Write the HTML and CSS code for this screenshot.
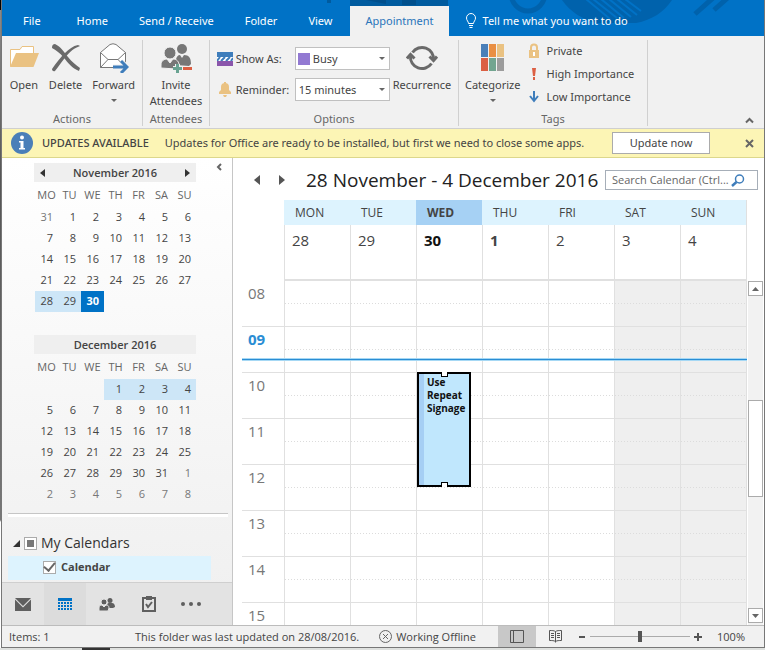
FILE: index.html
```html
<!DOCTYPE html>
<html lang="en">
<head>
  <meta charset="UTF-8">
  <meta name="viewport" content="width=device-width, initial-scale=1.0">
  <title>Calendar - Outlook</title>
  <link rel="stylesheet" href="styles.css">
</head>
<body>
  <div class="window">
    <header class="titlebar">
      <svg class="titlebar-art" width="440" height="36" viewBox="0 0 440 36" aria-hidden="true">
        <path d="M187 -7a17 18 0 0 0 34 0" fill="none" stroke="#0062ac" stroke-width="5"/>
        <path d="M238 0C246 12 260 20 272 23H312C328 20 340 12 348 0z" fill="#0062ac"/>
        <path d="M262 -1L286 19M269 -1L293 18M277 -1L300 18M285 -1L307 17M293 -1L313 15M301 -1L317 11" stroke="#0072c6" stroke-width="2"/>
        <path d="M371 14L389 -2M390 10L408 -6" fill="none" stroke="#0062ac" stroke-width="5"/>
        <path d="M3 0h4v3h-4zM26 0h98v6H26z" fill="#005b9f"/>
        <path d="M42 0h20v4zM78 0h14v5H78z" fill="#004f8c"/>
      </svg>
      <nav class="tabs">
        <button class="tab tab-file">File</button>
        <button class="tab">Home</button>
        <button class="tab">Send / Receive</button>
        <button class="tab">Folder</button>
        <button class="tab">View</button>
        <button class="tab tab-active">Appointment</button>
        <button class="tab tell-me">
          <svg width="12" height="16" viewBox="0 0 12 16" fill="none" stroke="#fff" aria-hidden="true">
            <path d="M3.5 10.5C3.5 8.500 1.500 7.500 1.500 5a4.500 4.500 0 0 1 9 0C10.500 7.500 8.500 8.500 8.500 10.500zM4 12.500h4M4.500 14.500h3"/>
          </svg>
          Tell me what you want to do
        </button>
      </nav>
    </header>

    <section class="ribbon">
      <div class="group group-actions">
        <div class="group-body">
          <button class="big-button">
            <svg width="30" height="30" viewBox="0 0 30 30" aria-hidden="true">
              <path d="M1.500 23.500V6.500H11l2-3h11.500V12" fill="#fff" stroke="#eac282"/>
              <path d="M7 10h23l-5.500 14H1z" fill="#eac282"/>
            </svg>
            <span>Open</span>
          </button>
          <button class="big-button">
            <svg width="30" height="30" viewBox="0 0 30 30" aria-hidden="true">
              <path d="M4 1c6 3 9 8 13 13s8 8 12 11l-1 3C21 25 17 20 13 15S5 7 1 5c0-3 1-4 3-4z" fill="#6a6a6a"/>
              <path d="M29 3c-8 3-12 8-16 13S7 24 4 28c-2 1-3-1-3-2C5 20 10 14 14 10S22 3 27 2z" fill="#6a6a6a"/>
            </svg>
            <span>Delete</span>
          </button>
          <button class="big-button">
            <svg width="30" height="30" viewBox="0 0 30 30" aria-hidden="true">
              <path d="M1.500 9.500L11 1.500q3-1.500 6 0l9.500 8V24.500h-25z" fill="#fff" stroke="#777"/>
              <path d="M1.500 9.500L9 16.500h10l7.500-7M1.500 24.500L9 16.500M26.500 24.500L19 16.500" fill="none" stroke="#777"/>
              <path d="M14 24h14M22 18l6 6-6 6" fill="none" stroke="#f1f1f1" stroke-width="5"/>
              <path d="M14 24h14M22 18l6 6-6 6" fill="none" stroke="#3e7dbb" stroke-width="3"/>
            </svg>
            <span>Forward</span>
            <i class="caret"></i>
          </button>
        </div>
        <div class="group-title">Actions</div>
      </div>

      <div class="group group-attendees">
        <div class="group-body">
          <button class="big-button">
            <svg width="32" height="30" viewBox="0 0 32 30" aria-hidden="true">
              <g fill="#777">
                <circle cx="22" cy="6" r="5"/>
                <path d="M16 22v-5c0-3 2-5 4-5l2 3 2-3c5 0 7 3 7 9l-2 2z"/>
                <circle cx="10" cy="10" r="6" stroke="#f1f1f1"/>
                <path d="M1 25v-3c0-4 3-6 6-6l3 4 3-4c4 0 6 3 6 6l-3 4z" stroke="#f1f1f1"/>
              </g>
              <path d="M13 25.500h9M17.500 21v9" stroke="#f1f1f1" stroke-width="5"/>
              <path d="M13 25.500h9M17.500 21v9" stroke="#69a392" stroke-width="3"/>
              <path d="M23 25.500h9" stroke="#dc5f43" stroke-width="3"/>
            </svg>
            <span>Invite<br>Attendees</span>
          </button>
        </div>
        <div class="group-title">Attendees</div>
      </div>

      <div class="group group-options">
        <div class="group-body">
          <div class="fields">
            <svg width="16" height="16" viewBox="0 0 16 16" aria-hidden="true">
              <path d="M0 1h16v5H0z" fill="#3e7dbb"/>
              <path d="M0 6h16v4H0z" fill="#fff"/>
              <path d="M0 10l3-4M4 10l4-4M9 10l4-4M14 10l2-3" stroke="#3e7dbb" stroke-width="2"/>
              <path d="M0 10h16v5H0z" fill="#8a56ab"/>
            </svg>
            <label for="show-as">Show As:</label>
            <div class="combo combo-swatch">
              <select id="show-as"><option>Busy</option><option>Free</option><option>Tentative</option></select>
              <i class="caret"></i>
            </div>
            <svg width="16" height="16" viewBox="0 0 16 16" aria-hidden="true">
              <path d="M2 12v-2l2-2V5a4 4 0 0 1 8 0v3l2 2v2zM6 13h4l-1 2H7zM7 0h2v2H7z" fill="#eac282"/>
            </svg>
            <label for="reminder">Reminder:</label>
            <div class="combo">
              <select id="reminder"><option>15 minutes</option><option>30 minutes</option><option>1 hour</option></select>
              <i class="caret"></i>
            </div>
          </div>
          <button class="big-button">
            <svg width="32" height="30" viewBox="0 0 32 30" fill="none" stroke="#6a6a6a" stroke-width="3" aria-hidden="true">
              <path d="M6.500 9.500A11.500 11.500 0 0 1 27.500 17M25.500 20.500A11.500 11.500 0 0 1 4.500 13"/>
              <path d="M1 15.500l3.500-4 4 4M23.500 13.500l4 4 3.500-4"/>
            </svg>
            <span>Recurrence</span>
          </button>
        </div>
        <div class="group-title">Options</div>
      </div>

      <div class="group group-tags">
        <div class="group-body">
          <button class="big-button">
            <svg width="30" height="30" viewBox="0 0 30 30" aria-hidden="true">
              <path d="M3 1h7v13H3z" fill="#4a7fb8"/>
              <path d="M11 1h7v13h-7z" fill="#e98f43"/>
              <path d="M19 1h7v13h-7z" fill="#eac282"/>
              <path d="M3 15h7v13H3z" fill="#db6043"/>
              <path d="M11 15h7v13h-7z" fill="#72a590"/>
              <path d="M19 15h7v13h-7z" fill="#9c9c9c"/>
            </svg>
            <span>Categorize</span>
            <i class="caret"></i>
          </button>
          <div class="tag-list">
            <button class="tag">
              <svg width="12" height="16" viewBox="0 0 12 16" aria-hidden="true">
                <path d="M3 8V4.500a3 3 0 0 1 6 0V8" fill="none" stroke="#eac282" stroke-width="2"/>
                <path d="M1 7h10v8H1z" fill="#eac282"/>
                <path d="M5 9h2v4H5z" fill="#fff"/>
              </svg>
              Private
            </button>
            <button class="tag">
              <svg width="12" height="16" viewBox="0 0 12 16" aria-hidden="true">
                <path d="M4 2h4L7 10H5zM5 11h2v3H5z" fill="#dc5f43"/>
              </svg>
              High Importance
            </button>
            <button class="tag">
              <svg width="12" height="16" viewBox="0 0 12 16" fill="none" stroke="#3e7dbb" stroke-width="2" aria-hidden="true">
                <path d="M6 2v10M2 7l4 5 4-5"/>
              </svg>
              Low Importance
            </button>
          </div>
        </div>
        <div class="group-title">Tags</div>
      </div>

      <button class="collapse-ribbon" aria-label="Collapse the ribbon">
        <svg width="9" height="7" viewBox="0 0 9 7" fill="none" stroke="#666" stroke-width="2"><path d="M1 5.500l3.500-3.500L8 5.500"/></svg>
      </button>
    </section>

    <section class="notice">
      <svg width="22" height="22" viewBox="0 0 22 22" aria-hidden="true">
        <circle cx="11" cy="11" r="11" fill="#4a7fb8"/>
        <circle cx="11" cy="5.500" r="2" fill="#fff"/>
        <path d="M8 9h4.500v7H14v1.500H8V16h1.500v-5.500H8z" fill="#fff"/>
      </svg>
      <strong class="notice-title">UPDATES AVAILABLE</strong>
      <span class="notice-text">Updates for Office are ready to be installed, but first we need to close some apps.</span>
      <button class="update-button">Update now</button>
      <button class="notice-close" aria-label="Close">
        <svg width="9" height="9" viewBox="0 0 9 9" stroke="#666" stroke-width="2"><path d="M1 1l7 7M8 1L1 8"/></svg>
      </button>
    </section>

    <main class="content">
      <aside class="sidebar">
        <button class="collapse-pane" aria-label="Minimize the folder pane">
          <svg width="6" height="8" viewBox="0 0 6 8" fill="none" stroke="#666" stroke-width="2"><path d="M5 1L2 4l3 3"/></svg>
        </button>

        <div class="month">
          <div class="month-title">
            <button aria-label="Previous month"><svg width="5" height="8" viewBox="0 0 5 8"><path d="M5 0v8L0 4z" fill="#333"/></svg></button>
            November 2016
            <button aria-label="Next month"><svg width="5" height="8" viewBox="0 0 5 8"><path d="M0 0v8l5-4z" fill="#333"/></svg></button>
          </div>
          <table class="month-days">
            <tr><th>MO</th><th>TU</th><th>WE</th><th>TH</th><th>FR</th><th>SA</th><th>SU</th></tr>
            <tr><td class="other">31</td><td>1</td><td>2</td><td>3</td><td>4</td><td>5</td><td>6</td></tr>
            <tr><td>7</td><td>8</td><td>9</td><td>10</td><td>11</td><td>12</td><td>13</td></tr>
            <tr><td>14</td><td>15</td><td>16</td><td>17</td><td>18</td><td>19</td><td>20</td></tr>
            <tr><td>21</td><td>22</td><td>23</td><td>24</td><td>25</td><td>26</td><td>27</td></tr>
            <tr><td class="selected">28</td><td class="selected">29</td><td class="today">30</td><td></td><td></td><td></td><td></td></tr>
          </table>
        </div>

        <div class="month">
          <div class="month-title">December 2016</div>
          <table class="month-days">
            <tr><th>MO</th><th>TU</th><th>WE</th><th>TH</th><th>FR</th><th>SA</th><th>SU</th></tr>
            <tr><td></td><td></td><td></td><td class="selected">1</td><td class="selected">2</td><td class="selected">3</td><td class="selected">4</td></tr>
            <tr><td>5</td><td>6</td><td>7</td><td>8</td><td>9</td><td>10</td><td>11</td></tr>
            <tr><td>12</td><td>13</td><td>14</td><td>15</td><td>16</td><td>17</td><td>18</td></tr>
            <tr><td>19</td><td>20</td><td>21</td><td>22</td><td>23</td><td>24</td><td>25</td></tr>
            <tr><td>26</td><td>27</td><td>28</td><td>29</td><td>30</td><td>31</td><td class="other">1</td></tr>
            <tr><td class="other">2</td><td class="other">3</td><td class="other">4</td><td class="other">5</td><td class="other">6</td><td class="other">7</td><td class="other">8</td></tr>
          </table>
        </div>

        <div class="calendar-list">
          <label class="list-heading">
            <svg width="7" height="7" viewBox="0 0 7 7" aria-hidden="true"><path d="M7 0v7H0z" fill="#333"/></svg>
            <input type="checkbox" class="check check-partial">
            My Calendars
          </label>
          <label class="list-item">
            <input type="checkbox" class="check" checked>
            Calendar
          </label>
        </div>

        <nav class="modules">
          <button aria-label="Mail">
            <svg width="16" height="13" viewBox="0 0 16 13"><path d="M0 0h16L8 8zM0 1.500l8 8 8-8V13H0z" fill="#5f5f5f"/></svg>
          </button>
          <button class="module-active" aria-label="Calendar">
            <svg width="14" height="13" viewBox="0 0 14 13" fill="#0072c6"><path d="M0 0h14v3H0z"/><path d="M0 5h14M0 8h14M0 11h14" stroke="#0072c6" stroke-width="2" stroke-dasharray="2 1"/></svg>
          </button>
          <button aria-label="People">
            <svg width="16" height="13" viewBox="0 0 16 13" fill="#5f5f5f"><circle cx="11" cy="2.500" r="2.500"/><path d="M8 10c0-3 0-5 2-5h3c2 0 3 2 3 4l-2 1z"/><g stroke="#e3e3e3"><circle cx="5" cy="4" r="3"/><path d="M0 13v-3c0-2 1-3 3-3l2 2 2-2c2 0 3 1 3 3l-1 3z"/></g></svg>
          </button>
          <button aria-label="Tasks">
            <svg width="14" height="16" viewBox="0 0 14 16" fill="none" stroke="#5f5f5f" stroke-width="2"><path d="M4 2H1v13h12V2h-3M4 8l2 3 4-5"/><path d="M4 0h6v4H4z" fill="#5f5f5f" stroke="none"/></svg>
          </button>
          <button aria-label="More">
            <svg width="20" height="4" viewBox="0 0 20 4" fill="#5f5f5f"><circle cx="2" cy="2" r="2"/><circle cx="10" cy="2" r="2"/><circle cx="18" cy="2" r="2"/></svg>
          </button>
        </nav>
      </aside>

      <section class="calendar">
        <div class="calendar-bar">
          <button aria-label="Back"><svg width="6" height="10" viewBox="0 0 6 10"><path d="M6 0v10L0 5z" fill="#555"/></svg></button>
          <button aria-label="Forward"><svg width="6" height="10" viewBox="0 0 6 10"><path d="M0 0v10l6-5z" fill="#555"/></svg></button>
          <h1>28 November - 4 December 2016</h1>
          <div class="search">
            <input type="text" placeholder="Search Calendar (Ctrl..." aria-label="Search Calendar">
            <svg width="14" height="13" viewBox="0 0 14 13" fill="none" stroke="#3e7dbb" aria-hidden="true"><circle cx="8.500" cy="5" r="4" stroke-width="1.500"/><path d="M5.500 8L1 12" stroke-width="2.500"/></svg>
          </div>
        </div>

        <div class="week-head">
          <div class="day-head"><span>MON</span><b>28</b></div>
          <div class="day-head"><span>TUE</span><b>29</b></div>
          <div class="day-head day-today"><span>WED</span><b>30</b></div>
          <div class="day-head day-first"><span>THU</span><b>1</b></div>
          <div class="day-head"><span>FRI</span><b>2</b></div>
          <div class="day-head"><span>SAT</span><b>3</b></div>
          <div class="day-head"><span>SUN</span><b>4</b></div>
        </div>

        <div class="week-body">
          <div class="days">
            <div class="day"></div>
            <div class="day"></div>
            <div class="day">
              <div class="day-events">
                <div class="event"><p>Use Repeat Signage</p></div>
              </div>
            </div>
            <div class="day"></div>
            <div class="day"></div>
            <div class="day weekend"></div>
            <div class="day weekend"></div>
          </div>
          <div class="hours">
            <div class="hour">08</div>
            <div class="hour hour-now">09</div>
            <div class="hour">10</div>
            <div class="hour">11</div>
            <div class="hour">12</div>
            <div class="hour">13</div>
            <div class="hour">14</div>
            <div class="hour">15</div>
          </div>
          <div class="now-line"></div>
          <div class="scrollbar">
            <button aria-label="Scroll up"><svg width="7" height="4" viewBox="0 0 7 4"><path d="M0 4h7L3.500 0z" fill="#666"/></svg></button>
            <div class="scroll-track"><div class="scroll-thumb"></div></div>
            <button aria-label="Scroll down"><svg width="7" height="4" viewBox="0 0 7 4"><path d="M0 0h7L3.500 4z" fill="#666"/></svg></button>
          </div>
        </div>
      </section>
    </main>

    <footer class="status">
      <span class="status-items">Items: 1</span>
      <span class="status-updated">This folder was last updated on 28/08/2016.</span>
      <span class="status-offline">
        <svg width="13" height="13" viewBox="0 0 13 13" fill="none" stroke="#666" aria-hidden="true"><circle cx="6.500" cy="6.500" r="6"/><path d="M4 4l5 5M9 4L4 9"/></svg>
        Working Offline
      </span>
      <button class="view-button view-active" aria-label="Normal view">
        <svg width="14" height="13" viewBox="0 0 14 13" fill="none" stroke="#555"><path d="M.5.5h13v12H.5zM3.500.5v12"/></svg>
      </button>
      <button class="view-button" aria-label="Reading view">
        <svg width="13" height="13" viewBox="0 0 13 13" fill="none" stroke="#555"><path d="M6.500 1.500v11M6.500 1.500C5 .5 3 .5.500.5v10c2.500 0 4.500 0 6 1 1.500-1 3.500-1 6-1V.5c-2.500 0-4.500 0-6 1M2 3.500h3M2 5.500h3M2 7.500h3M8 3.500h3M8 5.500h3M8 7.500h3"/></svg>
      </button>
      <div class="zoom">
        <button aria-label="Zoom out"><svg width="8" height="8" viewBox="0 0 8 8"><path d="M1 4h6" stroke="#555" stroke-width="2"/></svg></button>
        <input type="range" min="0" max="100" value="50" aria-label="Zoom">
        <button aria-label="Zoom in"><svg width="8" height="8" viewBox="0 0 8 8"><path d="M0 4h8M4 0v8" stroke="#555" stroke-width="2"/></svg></button>
      </div>
      <span class="zoom-level">100%</span>
    </footer>
  </div>
</body>
</html>
```
FILE: styles.css
```css
* {
  box-sizing: border-box;
}

body {
  margin: 0;
  height: 100vh;
  padding: 0 0 2px 1px;
  font-family: "Open Sans", "Noto Sans", sans-serif;
  font-size: 11px;
  line-height: 16px;
  color: #444;
  background: linear-gradient(to right, #dfe1df 82px, #333 82px, #333 110px, #dfe1df 110px) bottom / 100% 2px no-repeat,
    linear-gradient(#000 10px, #8a8a8a 10px, #555 180px, #777 520px, #fff 522px);
}

button {
  display: flex;
  align-items: center;
  justify-content: center;
  margin: 0;
  padding: 0;
  font: inherit;
  color: inherit;
  background: none;
  border: none;
}

svg {
  display: block;
  flex: none;
}

.window {
  display: flex;
  flex-direction: column;
  height: 100%;
  border: 1px solid #777;
  border-top: none;
  background: #fff;
}

.titlebar,
.ribbon,
.notice {
  font-family: "Noto Sans", "Open Sans", sans-serif;
}

/* title bar */
.titlebar {
  position: relative;
  height: 36px;
  flex: none;
  background: #0072c6;
}

.titlebar-art {
  position: absolute;
  top: 0;
  right: 0;
}

.tabs {
  position: relative;
  display: flex;
  align-items: flex-end;
  gap: 1px;
  height: 100%;
  padding-left: 6px;
}

.tab {
  height: 30px;
  padding: 0 15px;
  color: #fff;
  white-space: nowrap;
}

.tab-file {
  padding-right: 20px;
}

.tab-active {
  margin-left: 2px;
  color: #2a74ba;
  background: #f1f1f1;
}

.tell-me {
  gap: 6px;
}

/* ribbon */
.ribbon {
  display: flex;
  flex: none;
  height: 93px;
  padding: 4px 0 2px;
  background: #f1f1f1;
  border-bottom: 1px solid #cfcfcf;
}

.group {
  display: flex;
  flex-direction: column;
  justify-content: space-between;
  flex: none;
  border-right: 1px solid #d0d0d0;
}

.group-actions {
  width: 141px;
}

.group-attendees {
  width: 67px;
}

.group-options {
  width: 249px;
}

.group-tags {
  width: 189px;
}

.group-body {
  display: flex;
  justify-content: center;
  padding-top: 3px;
}

.group-actions .group-body {
  gap: 10px;
}

.group-title {
  line-height: 14px;
  color: #666;
  text-align: center;
}

.big-button {
  flex-direction: column;
  justify-content: flex-start;
  gap: 4px;
}

.caret {
  width: 0;
  border: 3px solid transparent;
  border-top-color: #666;
  border-bottom: none;
}

.big-button .caret {
  margin-top: 2px;
}

.fields {
  display: grid;
  grid-template-columns: 16px 56px 95px;
  gap: 8px 3px;
  align-items: center;
  padding-top: 4px;
}

.combo {
  position: relative;
  display: flex;
  align-items: center;
  height: 23px;
  background: #fff;
  border: 1px solid #c0c0c0;
}

.combo-swatch::before {
  content: "";
  width: 12px;
  height: 12px;
  margin-left: 2px;
  background: #9279d2;
}

.combo select {
  flex: 1;
  height: 100%;
  padding: 0 3px;
  font: inherit;
  color: inherit;
  background: none;
  border: none;
  appearance: none;
}

.combo .caret {
  position: absolute;
  right: 4px;
}

.fields + .big-button {
  margin-left: 3px;
}

.group-tags .group-body {
  justify-content: flex-start;
  gap: 8px;
  padding-left: 6px;
}

.tag-list {
  display: flex;
  flex-direction: column;
  gap: 7px;
}

.tag {
  justify-content: flex-start;
  gap: 6px;
  white-space: nowrap;
}

.collapse-ribbon {
  align-self: flex-end;
  margin: 0 10px 2px auto;
}

/* update notice */
.notice {
  display: flex;
  align-items: center;
  flex: none;
  height: 29px;
  padding: 0 10px 0 9px;
  background: #fcf5b5;
  border-bottom: 1px solid #dcd78c;
  white-space: nowrap;
}

.notice-title {
  margin-left: 9px;
  font-weight: 500;
}

.notice-text {
  margin-left: 16px;
}

.update-button {
  width: 98px;
  height: 22px;
  margin-left: auto;
  background: #fff;
  border: 1px solid #ababab;
}

.notice-close {
  margin-left: 35px;
}

.content {
  display: flex;
  flex: 1;
  min-height: 0;
}

/* folder pane */
.sidebar {
  position: relative;
  display: flex;
  flex-direction: column;
  width: 231px;
  flex: none;
  padding-top: 5px;
  background: linear-gradient(#fff, #efefef);
  border-right: 1px solid #c6c6c6;
}

.collapse-pane {
  position: absolute;
  top: 5px;
  right: 10px;
}

.month {
  width: 162px;
  margin: 0 0 23px 32px;
}

.month-title {
  display: flex;
  align-items: center;
  justify-content: center;
  height: 19px;
  padding: 0 6px;
  font-weight: 600;
  background: #efefef;
}

.month-title button:first-child {
  margin-right: auto;
}

.month-title button:last-child {
  margin-left: auto;
}

.month-days {
  width: 161px;
  margin-left: 1px;
  border-collapse: collapse;
  table-layout: fixed;
}

.month-days th {
  height: 25px;
  padding: 0;
  font-weight: 400;
  color: #666;
  text-align: center;
}

.month-days td {
  height: 21px;
  padding: 0 5px 1px 0;
  text-align: right;
}

.month-days .other {
  color: #777;
}

.month-days .selected {
  background: #cde6f7;
}

.month-days .today {
  color: #fff;
  font-weight: 700;
  background: #0072c6;
}

.calendar-list {
  margin: -15px 4px 0 6px;
  padding-top: 16px;
  border-top: 1px solid #c6c6c6;
  box-shadow: inset 0 3px #fff;
}

.list-heading {
  display: flex;
  align-items: center;
  gap: 4px;
  height: 26px;
  padding-left: 5px;
  font-size: 14px;
  color: #333;
}

.list-item {
  display: flex;
  align-items: center;
  gap: 5px;
  height: 24px;
  margin-right: 17px;
  padding: 0 0 2px 35px;
  font-weight: 700;
  background: #ddf3fe;
}

.check {
  display: flex;
  align-items: center;
  justify-content: center;
  width: 13px;
  height: 13px;
  margin: 0;
  background: #fff;
  border: 1px solid #ababab;
  appearance: none;
}

.check:checked::before {
  content: "";
  width: 5px;
  height: 9px;
  margin-bottom: 3px;
  border: solid #666;
  border-width: 0 2px 2px 0;
  transform: rotate(40deg);
}

.check-partial::before {
  content: "";
  width: 7px;
  height: 7px;
  background: #777;
}

.modules {
  display: flex;
  height: 43px;
  margin-top: auto;
  background: #e3e3e3;
  border-top: 1px solid #cfcfcf;
}

.modules button {
  width: 42px;
}

.modules .module-active {
  background: #dcdcdc;
}

/* week view */
.calendar {
  display: flex;
  flex-direction: column;
  flex: 1;
  min-width: 0;
  padding-left: 9px;
}

.calendar-bar {
  display: flex;
  align-items: center;
  height: 42px;
  padding: 2px 6px 0 12px;
}

.calendar-bar button {
  margin-right: 19px;
}

.calendar-bar h1 {
  margin: 0 0 0 2px;
  font-size: 19px;
  font-weight: 400;
  color: #222;
  white-space: nowrap;
}

.search {
  display: flex;
  align-items: center;
  width: 153px;
  height: 20px;
  margin-left: auto;
  padding-right: 12px;
  border: 1px solid #a6aeb8;
}

.search input {
  flex: 1;
  min-width: 0;
  padding: 0 0 0 6px;
  font: inherit;
  background: none;
  border: none;
}

.search input::placeholder {
  color: #666;
}

.week-head {
  display: grid;
  grid-template-columns: repeat(7, 1fr);
  height: 81px;
  flex: none;
  margin: 0 17px 0 42px;
  border-right: 1px solid #e0e0e0;
  border-bottom: 2px solid #e0e0e0;
}

.day-head {
  border-left: 1px solid #e0e0e0;
}

.day-head span {
  display: block;
  height: 25px;
  margin-left: -1px;
  padding-left: 11px;
  font-size: 12px;
  line-height: 25px;
  background: #ddf3fe;
}

.day-head b {
  display: block;
  padding: 5px 7px;
  font-size: 15px;
  line-height: 20px;
  font-weight: 400;
}

.day-today span {
  font-weight: 700;
  background: #a6d1f4;
}

.day-today b {
  font-weight: 700;
  color: #111;
}

.day-first b {
  font-weight: 700;
}

/* columns, hour lines and the current time share one grid */
.week-body {
  display: grid;
  grid-template-columns: 42px 1fr 17px;
  grid-template-rows: 100%;
  flex: 1;
  min-height: 0;
  overflow: hidden;
}

.days {
  display: grid;
  grid-template-columns: repeat(7, 1fr);
  grid-area: 1 / 2;
  border-right: 1px solid #e0e0e0;
}

.day {
  border-left: 1px solid #e0e0e0;
}

.weekend {
  background: #efefef;
}

.hours {
  grid-area: 1 / 1 / 2 / 3;
  overflow: hidden;
  margin-top: -1px;
}

.hour {
  height: 46px;
  padding: 2px 0 0 6px;
  font-size: 15px;
  line-height: 20px;
  color: #777;
  border-top: 1px solid #e0e0e0;
  background: repeating-linear-gradient(to right, #dcdcdc 0, #dcdcdc 1px, transparent 1px, transparent 3px) 43px 22px / 100% 1px no-repeat;
}

.hour-now {
  color: #2a8dd4;
  font-weight: 700;
}

.now-line {
  grid-area: 1 / 1 / 2 / 3;
  height: 3px;
  margin-top: 77px;
  background: #2a8dd4;
  border: solid #a6d8f4;
  border-width: 1px 0;
}

.day-events {
  position: relative;
  height: 100%;
}

.event {
  position: absolute;
  top: 91px;
  left: 0;
  right: 11px;
  height: 115px;
  padding: 2px 2px 0 8px;
  font-size: 10px;
  line-height: 13px;
  font-weight: 700;
  color: #111;
  background: #c0e7fd;
  border: 2px solid #000;
  box-shadow: inset 5px 0 #a6cff4;
}

.event p {
  margin: 0;
  overflow: hidden;
}

.event::before,
.event::after {
  content: "";
  position: absolute;
  left: 22px;
  width: 5px;
  height: 4px;
  background: #fff;
  border: 1px solid #000;
}

.event::before {
  top: -2px;
  border-top: none;
}

.event::after {
  bottom: -2px;
  border-bottom: none;
}

.scrollbar {
  grid-area: 1 / 3;
  display: flex;
  flex-direction: column;
  width: 15px;
  margin-left: 1px;
  padding-bottom: 2px;
  background: #f2f2f2;
}

.scrollbar button {
  height: 15px;
  background: #fff;
  border: 1px solid #ababab;
}

.scroll-track {
  flex: 1;
}

.scroll-thumb {
  height: 97px;
  margin-top: 104px;
  background: #fff;
  border: 1px solid #ababab;
}

/* status bar */
.status {
  display: flex;
  align-items: center;
  flex: none;
  height: 22px;
  padding: 0 19px 0 7px;
  background: #f1f1f1;
  border-top: 1px solid #bcbcbc;
  white-space: nowrap;
}

.status-updated {
  margin-left: auto;
}

.status-offline {
  display: flex;
  align-items: center;
  gap: 4px;
  margin: 0 22px 0 20px;
}

.view-button {
  width: 38px;
  height: 100%;
}

.view-active {
  background: #c8c8c8;
}

.zoom {
  display: flex;
  align-items: center;
  gap: 4px;
  margin: 0 15px 0 4px;
}

.zoom input {
  width: 100px;
  height: 12px;
  margin: 0;
  background: linear-gradient(#ababab, #ababab) center / 100% 1px no-repeat;
  appearance: none;
}

.zoom input::-webkit-slider-thumb {
  width: 4px;
  height: 11px;
  background: #555;
  appearance: none;
}
```
